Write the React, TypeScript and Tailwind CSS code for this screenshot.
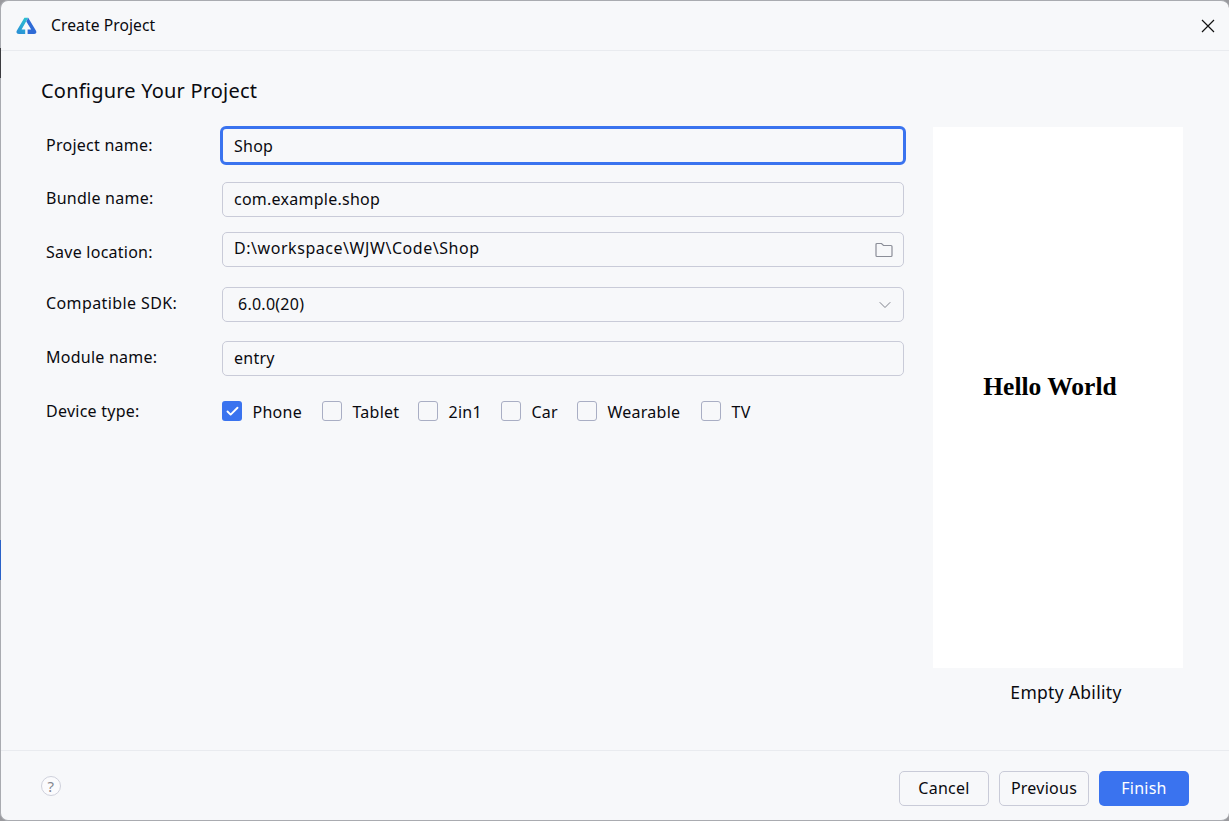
import React from 'react';
import { ChevronDown, Check } from 'lucide-react';

const devices = [
    { name: 'Phone', checked: true, w: 'w-[100px]' },
    { name: 'Tablet', w: 'w-[96px]' },
    { name: '2in1', w: 'w-[83px]' },
    { name: 'Car', w: 'w-[76px]' },
    { name: 'Wearable', w: 'w-[124px]' },
    { name: 'TV', w: 'w-[60px]' },
];

const Logo = () => (
    <svg width="21" height="18" viewBox="0 0 21 18" className="shrink-0">
        <defs>
            <linearGradient id="logoLeft" x1="0.7" y1="0" x2="0.2" y2="1">
                <stop offset="0" stopColor="#2bc0d0" />
                <stop offset="1" stopColor="#2a8fd6" />
            </linearGradient>
        </defs>
        <path d="M8.4 0.8 L12.2 0.8 L5.6 12.4 L9.2 12.4 L9.2 17 L3 17 C0.9 17 -0.2 15.4 0.9 13.6 Z" fill="url(#logoLeft)" />
        <path d="M12.2 0.8 L20 13.8 C21 15.4 20 17 18 17 L11.6 17 L11.6 12.4 L15.2 12.4 L10.3 4.4 Z" fill="#2f6bd6" />
    </svg>
);

const FolderIcon = () => (
    <svg width="18" height="16" viewBox="0 0 18 16" fill="none" stroke="#8b8e98" strokeWidth="1.2">
        <path d="M1 13.5 V2.5 C1 1.9 1.4 1.5 2 1.5 H6.5 L8.5 3.5 H16 C16.6 3.5 17 3.9 17 4.5 V13.5 C17 14.1 16.6 14.5 16 14.5 H2 C1.4 14.5 1 14.1 1 13.5 Z" />
    </svg>
);

const CloseIcon = () => (
    <svg width="14" height="14" viewBox="0 0 14 14" stroke="#111" strokeWidth="1.2" className="ml-auto">
        <path d="M1 1 L13 13 M13 1 L1 13" />
    </svg>
);

export default function App() {
    return (
        <div className="relative w-[1229px] h-[821px] bg-[#9a9a9e] font-['Noto_Sans',sans-serif] text-[16px] tracking-[0.25px] text-[#0a0a0f] overflow-hidden">
            <div className="w-[1229px] h-[821px] bg-[#f7f8fa] rounded-[8px] border-t border-l border-b border-[#a9abb0] border-r-0 flex flex-col">
                {/* title bar */}
                <div className="h-[50px] border-b border-[#e9ebef] flex items-center pl-[15px] pr-[14px] shrink-0">
                    <Logo />
                    <span className="ml-[14px] text-[15.6px] tracking-[0.1px]">Create Project</span>
                    <CloseIcon />
                </div>

                {/* body */}
                <div className="flex-1 flex pl-[40px] pr-[46px] min-h-0">
                    <div className="w-[866px] shrink-0">
                        <h1 className="text-[20px] leading-[28px] mt-[26px] font-normal tracking-[0.2px]">Configure Your Project</h1>
                        <div className="mt-[21px]">
                            <div className="flex items-center h-[39px]">
                                <label className="w-[181px] pl-[5px] shrink-0 -mt-[2px]">Project name:</label>
                                <div className="-ml-[2px] w-[686px] h-[39px] shrink-0 border-[3px] border-[#3a73ef] rounded-[6px] flex items-center pl-[11px]">
                                    Shop
                                </div>
                            </div>
                            <div className="flex items-center mt-[17px] h-[35px]">
                                <label className="w-[181px] pl-[5px] shrink-0 -mt-[4px]">Bundle name:</label>
                                <div className="w-[682px] h-[35px] border border-[#c9cbd8] rounded-[5px] flex items-center pl-[11px]">
                                    <span className="-mt-[2px]">com.example.shop</span>
                                </div>
                            </div>
                            <div className="flex items-center mt-[15px] h-[35px]">
                                <label className="w-[181px] pl-[5px] shrink-0 mt-[4px]">Save location:</label>
                                <div className="w-[682px] h-[35px] border border-[#c9cbd8] rounded-[5px] flex items-center pl-[11px] pr-[10px] justify-between">
                                    <span className="-mt-[4px] tracking-[0.55px]">D:\workspace\WJW\Code\Shop</span>
                                    <FolderIcon />
                                </div>
                            </div>
                            <div className="flex items-center mt-[20px] h-[35px]">
                                <label className="w-[181px] pl-[5px] shrink-0 -mt-[4px] tracking-[0.4px]">Compatible SDK:</label>
                                <div className="w-[682px] h-[35px] border border-[#c9cbd8] rounded-[5px] flex items-center pl-[15px] pr-[8px] justify-between">
                                    <span className="-mt-[2px]">6.0.0(20)</span>
                                    <ChevronDown size={20} strokeWidth={1.2} className="text-[#7f828c]" />
                                </div>
                            </div>
                            <div className="flex items-center mt-[19px] h-[35px]">
                                <label className="w-[181px] pl-[5px] shrink-0 -mt-[3px]">Module name:</label>
                                <div className="w-[682px] h-[35px] border border-[#c9cbd8] rounded-[5px] flex items-center pl-[11px]">
                                    <span className="-mt-[2px]">entry</span>
                                </div>
                            </div>
                            <div className="flex items-center mt-[23px] h-[24px]">
                                <label className="w-[181px] pl-[5px] shrink-0">Device type:</label>
                                <div className="flex items-center">
                                    {devices.map((d) => (
                                        <div key={d.name} className={`flex items-center ${d.w}`}>
                                            {d.checked ? (
                                                <span className="w-[20px] h-[20px] rounded-[3px] bg-[#3a73ef] flex items-center justify-center">
                                                    <Check size={15} strokeWidth={3} className="text-white" />
                                                </span>
                                            ) : (
                                                <span className="w-[20px] h-[20px] rounded-[3px] border border-[#a9aec4]" />
                                            )}
                                            <span className="ml-[10.5px] mt-[2px]">{d.name}</span>
                                        </div>
                                    ))}
                                </div>
                            </div>
                        </div>
                    </div>

                    {/* template preview */}
                    <div className="w-[250px] ml-[26px] mt-[76px] flex flex-col shrink-0">
                        <div className="h-[541px] bg-white flex justify-center pt-[244px] pr-[16px]">
                            <span className="font-['Liberation_Serif',serif] font-bold text-[25.5px] leading-[32px] tracking-normal text-black whitespace-nowrap">Hello World</span>
                        </div>
                        <div className="mt-[12px] pl-[16px] text-center leading-[24px] text-[17.5px] tracking-[0.3px] whitespace-nowrap">Empty Ability</div>
                    </div>
                </div>

                {/* footer */}
                <div className="h-[70px] border-t border-[#e9ebef] shrink-0 flex items-start pl-[40px] pr-[40px] pt-[20px]">
                    <span className="w-[20px] h-[20px] mt-[5px] rounded-full border border-[#cfd1dc] bg-[#fbfbfd] flex items-center justify-center text-[15px] text-[#85878f]">?</span>
                    <div className="ml-auto flex gap-[10px]">
                        <button className="w-[90px] h-[35px] pb-[2px] border border-[#c9cbd8] rounded-[5px]">Cancel</button>
                        <button className="w-[90px] h-[35px] pb-[2px] border border-[#c9cbd8] rounded-[5px]">Previous</button>
                        <button className="w-[90px] h-[35px] pb-[2px] bg-[#3a73ef] text-white rounded-[5px]">Finish</button>
                    </div>
                </div>
            </div>

            {/* slivers of the window behind the dialog */}
            <div className="absolute left-0 top-[540px] w-[1px] h-[40px] bg-[#2a62c8]" />
            <div className="absolute left-0 top-[48px] w-[1px] h-[30px] bg-[#3c3c40]" />
        </div>
    );
}
